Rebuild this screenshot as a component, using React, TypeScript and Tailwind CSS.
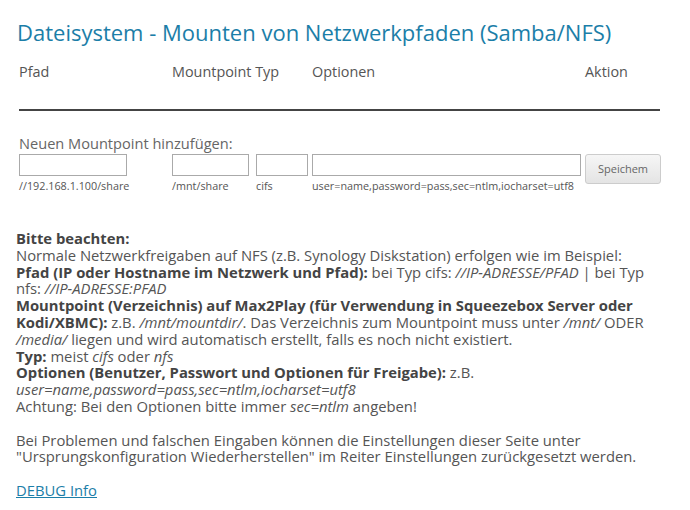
import React from "react";

export default function App() {
  const cols = "grid grid-cols-[153px_84px_56px_273px_75px]";
  return (
    <div className="min-h-[510px] w-[690px] bg-white text-[#555] [font-family:'Open_Sans',sans-serif]">
      <div className="pl-[17px] pr-[30px] pt-[17px]">
        <h1 className="text-[22px] leading-[30px] text-[#1b7ea8]">
          Dateisystem - Mounten von Netzwerkpfaden (Samba/NFS)
        </h1>
        <div className={`${cols} ml-[2px] mt-[16px] h-[48px] border-b-2 border-[#444] text-[14.4px] leading-[18px] text-[#555] whitespace-nowrap`}>
          <div>Pfad</div>
          <div>Mountpoint Typ</div>
          <div></div>
          <div>Optionen</div>
          <div>Aktion</div>
        </div>
        <div className="ml-[2px] mt-[22px] text-[14.6px] leading-[20px] text-[#666]">
          Neuen Mountpoint hinzufügen:
        </div>
        <div className={`${cols} ml-[2px] mt-[1px] text-[10.8px] leading-[14px] text-[#555] whitespace-nowrap`}>
          <div className="flex flex-col gap-[3px]">
            <input className="h-[22px] w-[108px] border border-[#aaa] bg-white" />
            <span>//192.168.1.100/share</span>
          </div>
          <div className="flex flex-col gap-[3px]">
            <input className="h-[22px] w-[77px] border border-[#aaa] bg-white" />
            <span>/mnt/share</span>
          </div>
          <div className="flex flex-col gap-[3px]">
            <input className="h-[22px] w-[52px] border border-[#aaa] bg-white" />
            <span>cifs</span>
          </div>
          <div className="flex flex-col gap-[3px]">
            <input className="h-[22px] w-[269px] border border-[#aaa] bg-white" />
            <span>user=name,password=pass,sec=ntlm,iocharset=utf8</span>
          </div>
          <div>
            <button className="h-[30px] w-[76px] rounded-[3px] border border-[#ccc] bg-gradient-to-b from-[#f6f6f6] to-[#e4e4e4] text-[11px] text-[#666]">
              Speichem
            </button>
          </div>
        </div>
        <div className="ml-[-1px] mt-[37px] w-[630px] text-[14.8px] leading-[16.8px] text-[#555]">
          <b className="font-bold text-[#444]">Bitte beachten:</b>
          <br />
          Normale Netzwerkfreigaben auf NFS (z.B. Synology Diskstation) erfolgen wie im Beispiel:
          <br />
          <b className="font-bold text-[#444]">Pfad (IP oder Hostname im Netzwerk und Pfad):</b> bei Typ cifs:{" "}
          <i>//IP-ADRESSE/PFAD</i> | bei Typ nfs: <i>//IP-ADRESSE:PFAD</i>
          <br />
          <b className="font-bold text-[#444]">
            Mountpoint (Verzeichnis) auf Max2Play (für Verwendung in Squeezebox Server oder Kodi/XBMC):
          </b>{" "}
          z.B. <i>/mnt/mountdir/</i>. Das Verzeichnis zum Mountpoint muss unter <i>/mnt/</i> ODER{" "}
          <i>/media/</i> liegen und wird automatisch erstellt, falls es noch nicht existiert.
          <br />
          <b className="font-bold text-[#444]">Typ:</b> meist <i>cifs</i> oder <i>nfs</i>
          <br />
          <b className="font-bold text-[#444]">Optionen (Benutzer, Passwort und Optionen für Freigabe):</b> z.B.{" "}
          <i>user=name,password=pass,sec=ntlm,iocharset=utf8</i>
          <br />
          Achtung: Bei den Optionen bitte immer <i>sec=ntlm</i> angeben!
          <br />
          <br />
          Bei Problemen und falschen Eingaben können die Einstellungen dieser Seite unter "Ursprungskonfiguration
          Wiederherstellen" im Reiter Einstellungen zurückgesetzt werden.
          <br />
          <br />
          <a href="#" className="text-[#1b7ea8] underline">
            DEBUG Info
          </a>
        </div>
      </div>
    </div>
  );
}
